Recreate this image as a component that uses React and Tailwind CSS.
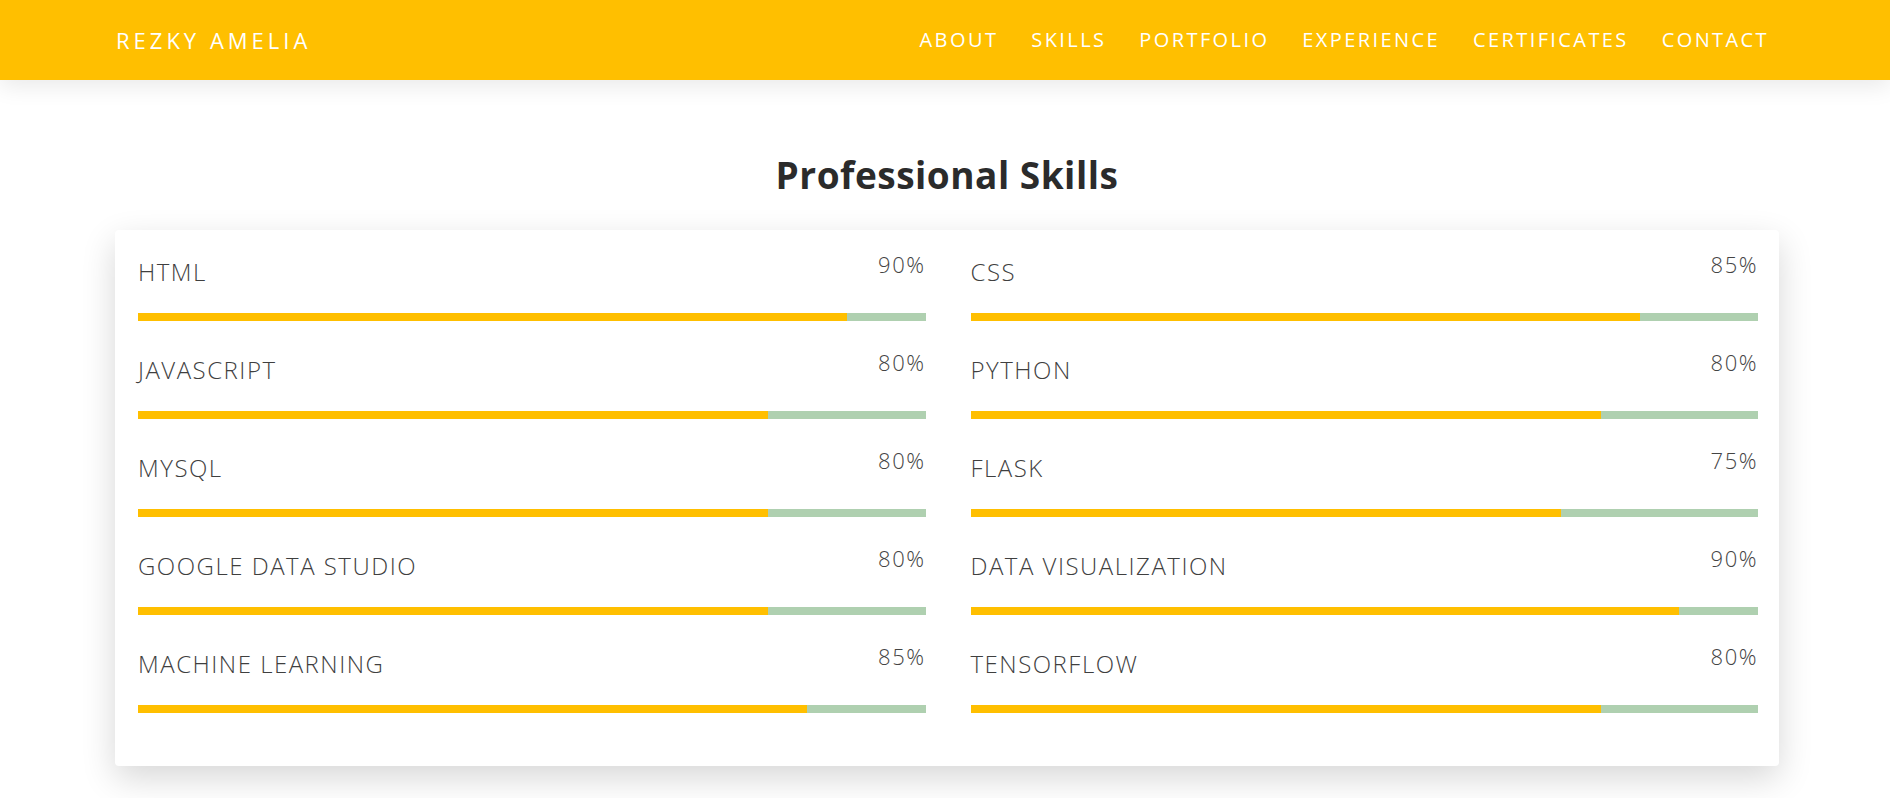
import React from "react";

const skills = [
  ["HTML", 90],
  ["CSS", 85],
  ["JAVASCRIPT", 80],
  ["PYTHON", 80],
  ["MYSQL", 80],
  ["FLASK", 75],
  ["GOOGLE DATA STUDIO", 80],
  ["DATA VISUALIZATION", 90],
  ["MACHINE LEARNING", 85],
  ["TENSORFLOW", 80],
];

const nav = ["ABOUT", "SKILLS", "PORTFOLIO", "EXPERIENCE", "CERTIFICATES", "CONTACT"];

export default function App() {
  return (
    <div
      className="min-h-[798px] bg-white"
      style={{ fontFamily: '"Open Sans", "Liberation Sans", sans-serif' }}
    >
      <header className="relative z-10 h-[80px] bg-[#ffbf00] shadow-[0_6px_22px_rgba(0,0,0,0.09)] flex items-center justify-between pl-[116px] pr-[121px]">
        <div className="text-white text-[22px] tracking-[4px] font-normal leading-none">
          REZKY AMELIA
        </div>
        <nav className="flex items-center gap-[33px]">
          {nav.map((n) => (
            <a key={n} className="text-white text-[20px] tracking-[2.4px] leading-none">
              {n}
            </a>
          ))}
        </nav>
      </header>

      <main className="w-[1664px] ml-[115px]">
        <h2 className="mt-[73px] text-center text-[37px] tracking-[0.5px] leading-[1.2] font-bold text-[#2b2b2b]">
          Professional Skills
        </h2>
        <section className="mt-[33px] bg-white rounded-[4px] shadow-[0_12px_34px_rgba(0,0,0,0.16)] pt-[18px] pb-[53px] pl-[23px] pr-[21px]">
          <div className="grid grid-cols-2 gap-x-[45px] gap-y-[25px]">
            {skills.map(([name, pct]) => (
              <div key={name}>
                <div className="flex items-start justify-between">
                  <span className="mt-[7px] text-[24px] leading-[33px] font-light tracking-[1.5px] text-[#3f3f3f]">
                    {name}
                  </span>
                  <span className="text-[22px] leading-[33px] font-light tracking-[1.5px] text-[#444]">
                    {pct}%
                  </span>
                </div>
                <div className="mt-[25px] h-[8px] bg-[#afd0b0] flex">
                  <div className="h-full bg-[#ffbf00]" style={{ width: `${pct}%` }} />
                </div>
              </div>
            ))}
          </div>
        </section>
      </main>
    </div>
  );
}
